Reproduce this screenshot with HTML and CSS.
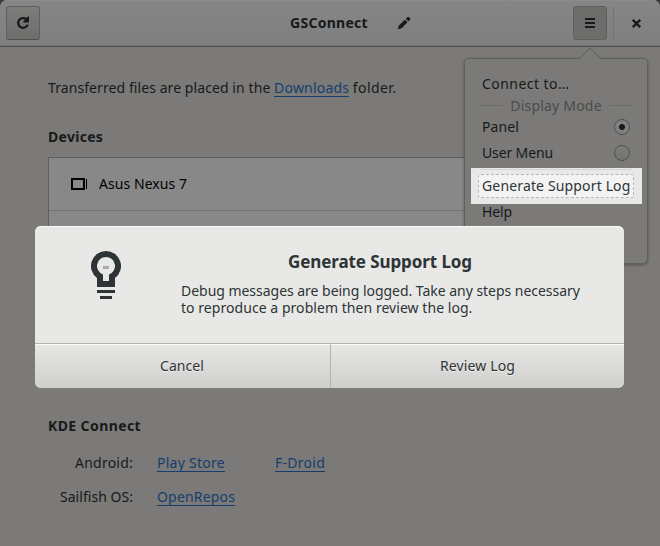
FILE: index.html
```html
<!DOCTYPE html>
<html lang="en">
<head>
<meta charset="utf-8">
<title>GSConnect</title>
<link rel="stylesheet" href="styles.css">
</head>
<body>
<div class="window">
  <header class="headerbar">
    <div class="tool refresh">
      <svg width="16" height="16" viewBox="0 0 16 16"><path d="M11.3 4.2A4.9 4.9 0 1 0 12.7 9.7" fill="none" stroke="#17191a" stroke-width="2.3"/><path d="M14 1.6V7.5H8.2V6.4L12.8 1.6Z" fill="#17191a"/></svg>
    </div>
    <div class="heading"><h1>GSConnect</h1>
      <svg width="14" height="14" viewBox="0 0 14 14"><path d="M.8 13.2 1.8 9.4 7.9 3.7 10.5 6.3 4.5 12.2ZM8.8 2.8 10.7 1Q11.3.5 11.9 1L13.2 2.4Q13.7 3 13.2 3.6L11.4 5.4Z" fill="#17191a"/></svg>
    </div>
    <div class="tool menu">
      <svg width="10" height="10" viewBox="0 0 10 10"><path d="M0 0h10v2H0zM0 4h10v2H0zM0 8h10v2H0z" fill="#17191a"/></svg>
    </div>
    <div class="close">
      <svg width="9" height="9" viewBox="0 0 9 9"><path d="M.8.8 8.2 8.2M8.2.8.8 8.2" stroke="#17191a" stroke-width="2.3"/></svg>
    </div>
  </header>
  <main>
    <p class="transfer">Transferred files are placed in the <a class="downloads">Downloads</a> <span class="folder">folder.</span></p>
    <h2 class="devices">Devices</h2>
    <div class="list">
      <div class="row">
        <svg width="17" height="12" viewBox="0 0 17 12"><path d="M1 1H13V11H1Z" fill="none" stroke="#000" stroke-width="2"/><path d="M15 1h1v10h-1z"/></svg>
        <span>Asus Nexus 7</span>
      </div>
    </div>
    <h2 class="kde">KDE Connect</h2>
    <div class="links">
      <span class="label android">Android:</span><span><a class="play">Play Store</a></span><span><a class="fdroid">F-Droid</a></span>
      <span class="label">Sailfish OS:</span><span><a class="repos">OpenRepos</a></span>
    </div>
  </main>
</div>

<div class="popover">
  <svg class="arrow" width="24" height="13" viewBox="0 0 24 13"><path d="M1 12.5 12 1 23 12.5V13H1Z" fill="#7b7a78"/><path d="M0 11.5H1.5L12 1 22.5 11.5H24" fill="none" stroke="#5f5f5d"/></svg>
  <div class="item connect">Connect to…</div>
  <div class="section"><span>Display Mode</span></div>
  <div class="item panel">Panel<i class="radio on"></i></div>
  <div class="item user">User Menu<i class="radio"></i></div>
  <div class="spotlight"><div class="focus">Generate Support Log</div></div>
  <div class="item help">Help</div>
</div>

<div class="dialog">
  <div class="message">
    <svg width="30" height="48" viewBox="0 0 30 48"><path fill="#2e3436" fill-rule="evenodd" d="M15 0A15 15 0 0 0 6 27V36H24V27A15 15 0 0 0 15 0ZM15 6A9 9 0 0 1 18 23.5V30H12V23.5A9 9 0 0 1 15 6Z"/><path fill="#2e3436" d="M6 39h18v3H6zM9 45h12v3H9z"/><path fill="#a9aaa9" d="M12 15h6v3h-6z"/></svg>
    <div class="copy">
      <h3>Generate Support Log</h3>
      <p>Debug messages are being logged. Take any steps necessary to reproduce a problem then review the log.</p>
    </div>
  </div>
  <div class="actions">
    <div class="action cancel">Cancel</div>
    <div class="action review">Review Log</div>
  </div>
</div>
</body>
</html>
```
FILE: styles.css
```css
* { box-sizing: border-box; }
body {
  margin: 0;
  width: 660px;
  height: 546px;
  overflow: hidden;
  background: #3a3a38;
  color: #17191a;
  font: 14px/19px "Noto Sans", sans-serif;
  white-space: nowrap;
}
h1, h2, h3, p { margin: 0; font-size: 14px; }
svg { display: block; flex: none; }

.window {
  height: 546px;
  background: #7b7a78;
  border-radius: 7px 7px 0 0;
  overflow: hidden;
}
.headerbar {
  display: flex;
  height: 47px;
  padding: 6px 6px 0;
  background: linear-gradient(#828282, #858585 3px, #7f7f7f);
  border-bottom: 1px solid #50504b;
  box-shadow: inset 0 1px #8b8b8b, inset 0 -1px #737371;
}
.tool {
  display: flex;
  align-items: center;
  justify-content: center;
  width: 34px;
  height: 34px;
  border: 1px solid #5f5f5c;
  border-radius: 3px;
}
.refresh { background: linear-gradient(#7d7d7b, #6d6d6b); border-bottom-color: #515150; }
.menu { background: #6d6d6b; }
.heading {
  display: flex;
  align-items: center;
  flex: 1;
  height: 34px;
  padding-left: 250px;
}
.heading h1 { width: 107px; padding-bottom: 2px; letter-spacing: .28px; }
.close {
  display: flex;
  align-items: center;
  justify-content: center;
  width: 41px;
  height: 34px;
  margin-left: 6px;
  padding-left: 5px;
  border-left: 1px solid #737371;
}

main { padding: 31px 48px 0; }
a { color: #153e6f; border-bottom: 1px solid #153e6f; display: inline-block; line-height: 17px; }
.transfer { letter-spacing: .08px; }
.downloads { letter-spacing: .19px; }
.folder { letter-spacing: .4px; }
h2.devices { margin-top: 30px; letter-spacing: .28px; }
.list {
  height: 178px;
  margin-top: 11px;
  background: #888;
  border: 1px solid #5f5f5d;
}
.row {
  display: flex;
  align-items: center;
  gap: 11px;
  height: 53px;
  padding-left: 22px;
  border-bottom: 1px solid #737371;
  color: #000;
  letter-spacing: .06px;
}
.row span { padding-bottom: 1px; }
h2.kde { margin-top: 81px; letter-spacing: .4px; }
.links {
  display: grid;
  grid-template-columns: 85px 94px 100px;
  column-gap: 24px;
  row-gap: 15px;
  margin-top: 18px;
}
.label { text-align: right; letter-spacing: .04px; }
.android { letter-spacing: .23px; }
.play, .fdroid { letter-spacing: .27px; }
.repos { letter-spacing: .17px; }

.popover {
  position: absolute;
  left: 464px;
  top: 58px;
  width: 184px;
  height: 206px;
  padding: 15px 15px 0 17px;
  background: #7b7a78;
  border: 1px solid #5f5f5d;
  border-radius: 5px;
  box-shadow: 0 1px 3px #0005;
}
.arrow { position: absolute; left: 113px; top: -12px; }
.item { display: flex; justify-content: space-between; align-items: center; height: 19px; }
.connect { letter-spacing: .45px; }
.section {
  display: flex;
  align-items: center;
  gap: 7px;
  height: 19px;
  margin: 3px 0 2px -2px;
  color: #4a4c4c;
  letter-spacing: .2px;
}
.section::before, .section::after { content: ""; flex: 1; height: 1px; background: #6b6b69; }
.panel { letter-spacing: .1px; }
.user { margin-top: 7px; letter-spacing: -.13px; }
.radio {
  width: 16px;
  height: 16px;
  margin-right: 2px;
  border: 1px solid #4f4f4d;
  border-radius: 50%;
  background: linear-gradient(#7d7d7b, #727270);
}
.radio.on { background: radial-gradient(circle, #17191a 2.6px, #80807e 3.3px); }
.spotlight {
  width: 171px;
  height: 36px;
  margin: 6px 0 0 -11px;
  padding: 6px 8px 0 7px;
  background: linear-gradient(#d5d5d3, #d5d5d3) 9px 1px / 152px 1px no-repeat #e8e8e6;
}
.focus {
  height: 24px;
  padding: 2px 0 0 3px;
  border: 1px dashed #b5b6b5;
  border-radius: 3px;
  background: #f3f3f3;
  color: #2e3436;
  line-height: 18px;
  letter-spacing: .15px;
}
.help { margin-top: -2px; letter-spacing: -.12px; }

.dialog {
  position: absolute;
  left: 35px;
  top: 226px;
  width: 589px;
  height: 162px;
  overflow: hidden;
  border-radius: 6px;
  background: #e8e8e6;
  color: #2e3436;
  box-shadow: inset 0 1px #fbfbfa;
}
.message { display: flex; height: 117px; padding: 25px 0 0 56px; gap: 60px; }
.copy { margin-top: -1px; }
.copy h3 { width: 398px; font-size: 17px; line-height: 23px; text-align: center; letter-spacing: -.09px; }
.copy p { width: 402px; margin-top: 9px; line-height: 17px; white-space: normal; }
.copy p::first-line { letter-spacing: -.03px; }
.copy p { letter-spacing: .05px; }
.actions {
  display: flex;
  height: 45px;
  border-top: 1px solid #b3b3b0;
  background: linear-gradient(#fbfbfa 1px, #e6e6e4 1px, #cfcfcd);
}
.action { display: flex; justify-content: center; align-items: center; padding-bottom: 2px; text-shadow: 0 1px #fff9; }
.cancel { width: 296px; padding-right: 1px; border-right: 1px solid #b3b3b0; letter-spacing: .07px; }
.review { flex: 1; letter-spacing: .13px; }
```
